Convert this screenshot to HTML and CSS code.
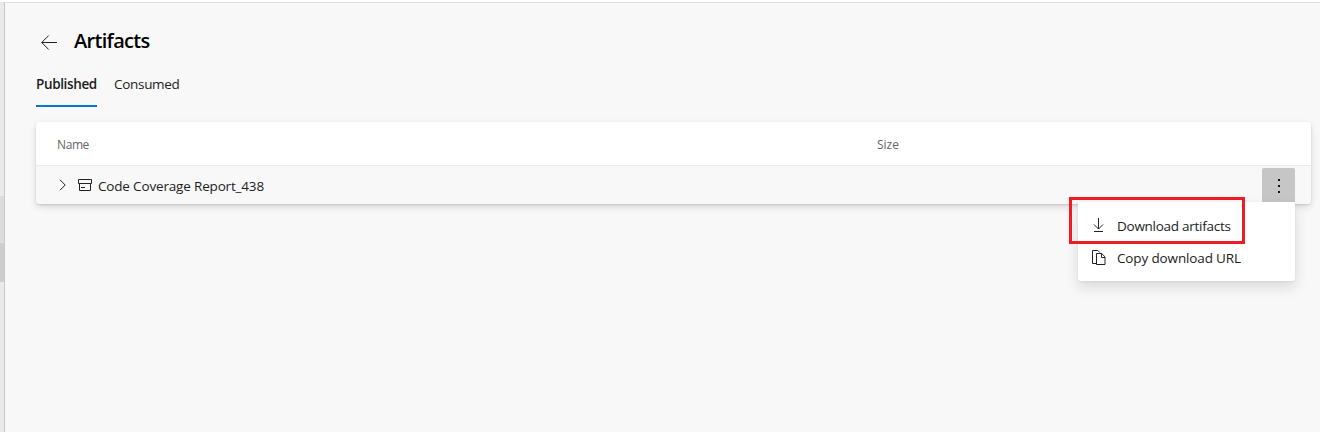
FILE: index.html
```html
<!DOCTYPE html>
<html lang="en">
<head>
<meta charset="utf-8">
<title>Artifacts</title>
<link rel="stylesheet" href="styles.css">
</head>
<body>
<div class="page">
  <aside class="rail"><div class="track"><div class="thumb"></div></div></aside>
  <main class="content">
    <header class="header">
      <svg class="back" width="16" height="16" viewBox="0 0 16 16"><path d="M16 7.5H.9M7.7.5l-7 7 7 7"/></svg>
      <h1 class="title">Artifacts</h1>
    </header>
    <nav class="tabs">
      <a class="tab active"><span>Published</span></a>
      <a class="tab"><span>Consumed</span></a>
    </nav>
    <section class="card">
      <div class="row head"><span class="name">Name</span><span class="size">Size</span></div>
      <div class="row item">
        <svg class="chevron" width="8" height="12" viewBox="0 0 8 12"><path d="M1 .8L6.2 6 1 11.2"/></svg>
        <svg class="archive" width="14" height="12" viewBox="0 0 14 12"><path d="M.5.5h13v4H.5zM1.5 4.5v7h11v-7M3 8.5h4"/></svg>
        <span class="label">Code Coverage Report_438</span>
        <div class="more">
          <svg width="3" height="15" viewBox="0 0 3 15"><path d="M1 1h2v2H1zM1 7h2v2H1zM1 13h2v2H1z"/></svg>
          <div class="menu">
            <div class="option">
              <svg class="arrow" width="14" height="16" viewBox="0 0 14 16"><path d="M6.5 1v11M2 7.5L6.5 12 11 7.5M2 14.5h9"/></svg>
              <span class="download">Download artifacts</span>
            </div>
            <div class="option">
              <svg class="sheets" width="14" height="16" viewBox="0 0 14 16"><path d="M4.5 13.5h-4V.5h5.3l2 2M4.5 3.5h5.2l3.3 3.3v7.7H4.5zM9.5 3.5v4H13"/></svg>
              <span class="copy">Copy download URL</span>
            </div>
            <div class="highlight"></div>
          </div>
        </div>
      </div>
    </section>
  </main>
</div>
</body>
</html>
```
FILE: styles.css
```css
* { box-sizing: border-box; }
body { margin: 0; background: #fff; color: #1c1c1c; font: 13.5px/20px "Open Sans", "Noto Sans", sans-serif; }
svg { display: block; flex: none; fill: none; stroke: #222; stroke-width: 1; }
span, h1 { white-space: nowrap; }
.page { display: flex; height: 432px; padding-top: 2px; overflow: hidden; }
.rail { width: 5px; flex: none; background: #eaeaea; border-right: 1px solid #c8c8c8; padding-top: 194px; }
.track { height: 86px; background: #dcdcdc; padding-top: 47px; }
.thumb { height: 39px; background: #cdcdcd; border-radius: 0 2px 2px 0; }
.content { flex: 1; min-width: 0; background: #f8f8f8; border-top: 1px solid #e0e0e0; padding: 22px 9px 0 31px; }
.header { display: flex; align-items: center; height: 33px; padding: 0 0 2px 5px; }
.back { margin-top: 5px; }
.title { margin: 0 0 0 17px; font-size: 20px; font-weight: 600; line-height: 28px; letter-spacing: -.68px; color: #000; }
.tabs { display: flex; gap: 17px; height: 49px; }
.tab { height: 49px; padding-top: 16px; letter-spacing: -.3px; }
.active { width: 61px; border-bottom: 2px solid #0078d4; font-weight: 600; letter-spacing: -.36px; }
.card { margin-top: 15px; background: #fff; border-radius: 4px; box-shadow: 0 3px 7px rgba(0,0,0,.13), 0 1px 2px rgba(0,0,0,.12); }
.row { display: flex; align-items: center; }
.head { height: 44px; padding: 2px 0 0 21px; border-bottom: 1px solid #eaeaea; color: #666; font-size: 12px; }
.name { width: 820px; letter-spacing: -.4px; }
.item { height: 38px; padding: 0 16px 0 23px; background: #f8f8f8; border-radius: 0 0 4px 4px; }
.archive { margin-left: 11px; }
.label { margin-left: 6px; padding-top: 2px; letter-spacing: -.17px; }
.more { position: relative; display: flex; align-items: center; justify-content: center; width: 33px; height: 34px; margin-left: auto; background: #c6c6c6; border-radius: 2px 2px 0 0; }
.more > svg { fill: #111; stroke: none; }
.menu { position: absolute; top: 34px; right: 0; width: 217px; height: 79px; padding: 8px 0 8px 14px; background: #fff; border-radius: 3px; box-shadow: 0 6px 14px rgba(0,0,0,.13), 0 1px 3px rgba(0,0,0,.05); }
.option { display: flex; align-items: center; gap: 11px; height: 32px; }
.arrow { margin-top: -2px; }
.sheets { margin-top: -1px; }
.download { letter-spacing: -.27px; }
.copy { letter-spacing: -.14px; }
.highlight { position: absolute; left: -9px; top: -5px; width: 176px; height: 47px; border: 3px solid #ed1c24; }
```
